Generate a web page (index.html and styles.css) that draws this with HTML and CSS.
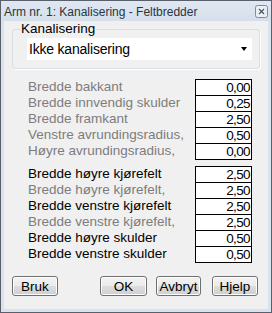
FILE: index.html
```html
<!DOCTYPE html>

<html>
    <head>
        <link rel="stylesheet" href="styles.css">
        <title>Feltbredder</title>
        <meta charset="UTF-8">
    </head>
    <body>
        <div class="window">
            <div class="titlebar">
                <span class="title">Arm nr. 1: Kanalisering - Feltbredder</span>
                <span class="close">
                    <svg width="13" height="13" viewBox="0 0 13 13">
                        <rect x="0.5" y="0.5" width="12" height="12" rx="2" fill="#e9eef4" stroke="#7d8b9b"/>
                        <path d="M4 4 L9 9 M9 4 L4 9" stroke="#fff" stroke-width="3"/>
                        <path d="M4 4 L9 9 M9 4 L4 9" stroke="#4a5563" stroke-width="1.4"/>
                    </svg>
                </span>
            </div>
            <div class="client">
                <fieldset class="group">
                    <legend>Kanalisering</legend>
                    <div class="combo">
                        <span>Ikke kanalisering</span>
                        <span class="arrow"></span>
                    </div>
                </fieldset>

                <div class="fields first">
                    <div class="row off"><span>Bredde bakkant</span><span class="val">0,00</span></div>
                    <div class="row off"><span>Bredde innvendig skulder</span><span class="val">0,25</span></div>
                    <div class="row off"><span>Bredde framkant</span><span class="val">2,50</span></div>
                    <div class="row off"><span>Venstre avrundingsradius,</span><span class="val">0,50</span></div>
                    <div class="row off"><span>Høyre avrundingsradius,</span><span class="val">0,00</span></div>
                </div>

                <div class="fields second">
                    <div class="row"><span>Bredde høyre kjørefelt</span><span class="val">2,50</span></div>
                    <div class="row off"><span>Bredde høyre kjørefelt,</span><span class="val">2,50</span></div>
                    <div class="row"><span>Bredde venstre kjørefelt</span><span class="val">2,50</span></div>
                    <div class="row off"><span>Bredde venstre kjørefelt,</span><span class="val">2,50</span></div>
                    <div class="row"><span>Bredde høyre skulder</span><span class="val">0,50</span></div>
                    <div class="row"><span>Bredde venstre skulder</span><span class="val">0,50</span></div>
                </div>

                <div class="buttons">
                    <button class="btn bruk">Bruk</button>
                    <button class="btn ok">OK</button>
                    <button class="btn avbryt">Avbryt</button>
                    <button class="btn hjelp">Hjelp</button>
                </div>
            </div>
        </div>
    </body>
</html>
```

FILE: styles.css
```css
body {
    margin: 0;
    font-family: "Liberation Sans", Arial, sans-serif;
    font-size: 13.5px;
}
.window {
    width: 272px;
    height: 313px;
    box-sizing: border-box;
    border: 1px solid #5a6069;
    background-color: #d9e3ee;
    padding: 0 3px 3px 3px;
    display: flex;
    flex-direction: column;
}
.titlebar {
    height: 20px;
    display: flex;
    align-items: flex-start;
    justify-content: space-between;
    margin: 0 -3px;
    padding: 0 3px;
    background: linear-gradient(#dfe8f2, #d5dfea);
}
.title {
    padding-top: 3px;
    line-height: 17px;
    font-size: 12px;
    color: #2b3440;
}
.close {
    margin-top: 4px;
    width: 13px;
    height: 13px;
}
.close svg {
    display: block;
}
.client {
    flex: 1;
    background-color: #f0f0f0;
}
.group {
    margin: 0 8px;
    padding: 1px 7px 8px 14px;
    border: 1px solid #d5dfe5;
    border-radius: 3px;
    box-shadow: 1px 1px 0 #fff;
}
.group legend {
    margin-left: -7px;
    padding: 0 1px;
    line-height: 16px;
    color: #000;
}
.combo {
    height: 22px;
    width: 225px;
    box-sizing: border-box;
    background-color: #fff;
    display: flex;
    align-items: center;
    padding-left: 2px;
    font-size: 14px;
    letter-spacing: -0.2px;
}
.arrow {
    margin-left: auto;
    margin-right: 5px;
    width: 0;
    height: 0;
    border-left: 3.5px solid transparent;
    border-right: 3.5px solid transparent;
    border-top: 4px solid #000;
}
.fields {
    padding: 0 16px 0 24px;
}
.first {
    margin-top: 10px;
}
.second {
    margin-top: 7px;
}
.row {
    height: 16px;
    line-height: 16px;
    display: flex;
    justify-content: space-between;
    color: #000;
}
.row.off {
    color: #7d7d7d;
}
.val {
    width: 57px;
    height: 16px;
    box-sizing: border-box;
    border: 1px solid #000;
    border-bottom: none;
    background-color: #fff;
    color: #000;
    text-align: right;
    padding-right: 1px;
    line-height: 15px;
    letter-spacing: -0.6px;
}
.row:last-child .val {
    height: 17px;
    border-bottom: 1px solid #000;
}
.buttons {
    display: flex;
    margin-top: 14px;
    padding-left: 8px;
}
.btn {
    height: 20px;
    padding: 0;
    font-family: "Liberation Sans", Arial, sans-serif;
    font-size: 13.5px;
    color: #000;
    border: 1px solid #707070;
    border-radius: 3px;
    background: linear-gradient(#f2f2f2 0%, #ebebeb 50%, #dddddd 51%, #cfcfcf 100%);
    box-shadow: inset 0 0 0 1px #fcfcfc;
}
.bruk {
    width: 46px;
}
.ok {
    width: 47px;
    margin-left: 42px;
}
.avbryt {
    width: 45px;
    margin-left: 9px;
}
.hjelp {
    width: 46px;
    margin-left: 11px;
}
```
